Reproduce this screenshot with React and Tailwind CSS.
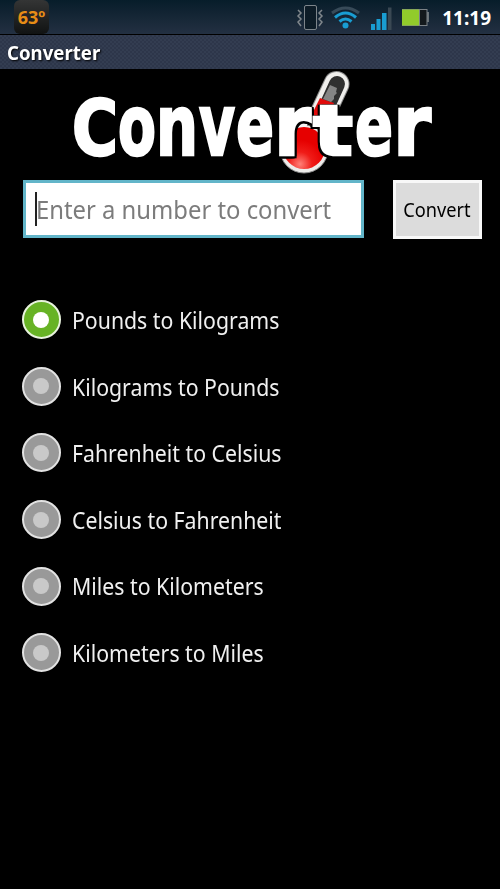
import { useState } from 'react'

const conversions = [
  'Pounds to Kilograms',
  'Kilograms to Pounds',
  'Fahrenheit to Celsius',
  'Celsius to Fahrenheit',
  'Miles to Kilometers',
  'Kilometers to Miles',
]

// x, width and size of each letter in the wordmark
const logoLetters = [
  { char: 'C', x: 72, width: 46, size: 76 },
  { char: 'o', x: 118, width: 38, size: 84 },
  { char: 'n', x: 156, width: 42, size: 84 },
  { char: 'v', x: 199, width: 36, size: 86 },
  { char: 'e', x: 236, width: 38, size: 84 },
  { char: 'r', x: 274, width: 37, size: 84 },
  { char: 't', x: 313, width: 40, size: 69 },
  { char: 'e', x: 355, width: 38, size: 84 },
  { char: 'r', x: 393, width: 38, size: 84 },
]

function StatusIcons() {
  return (
    <svg width="134" height="34" viewBox="296 0 134 34" fill="none">
      {/* vibrate */}
      <rect x="304.500" y="5.500" width="12" height="24" rx="1.500" fill="#0d1c27" stroke="#7d858b" />
      <path d="M298 10l3 3-3 3 3 3-3 3 3 4M322 10l-3 3 3 3-3 3 3 3-3 4" stroke="#80878c" strokeWidth="1.500" />
      {/* wifi */}
      <path d="M332 13Q345.500 3 359 13" stroke="#384b59" strokeWidth="3" />
      <path d="M335 17.500Q345.500 8.500 356 17.500M339.500 21.500Q345.500 16.500 351.500 21.500" stroke="#199dd2" strokeWidth="3" />
      <circle cx="345.500" cy="25.500" r="3" fill="#199dd2" />
      {/* signal */}
      <path d="M371 24h4v6h-4zM376.500 19h4v11h-4zM382 13h4.500v17H382z" fill="#199dd2" />
      <path d="M388 7.500h3.500V30H388z" fill="#3a4853" />
      {/* battery */}
      <path d="M427 12h2v10h-2z" fill="#6b7479" />
      <rect x="402" y="9" width="25.500" height="17" fill="#7b8286" />
      <rect x="402" y="9.500" width="17" height="16" fill="#91cb2b" />
      <rect x="420" y="10" width="6.500" height="15" fill="#13191c" />
    </svg>
  )
}

function Logo() {
  return (
    <svg className="block" width="500" height="110" viewBox="0 69 500 110">
      <defs>
        <radialGradient id="liquid" cx="300" cy="164" r="24" gradientUnits="userSpaceOnUse">
          <stop offset="0" stopColor="#ff8078" />
          <stop offset="0.500" stopColor="#f01c18" />
          <stop offset="1" stopColor="#e60000" />
        </radialGradient>
      </defs>

      {/* thermometer */}
      <circle cx="304" cy="149" r="24" fill="#eeecea" stroke="#8b8b8b" />
      <circle cx="304" cy="148" r="21" fill="url(#liquid)" />
      <path d="M290 126q8-6 18-2l-2 3q-8-1-16 3z" fill="#f5f5f5" />
      <path d="M336.500 84L322 115" stroke="#8b8b8b" strokeWidth="26" strokeLinecap="round" />
      <path d="M336.500 84L322 115" stroke="#f0efed" strokeWidth="24" strokeLinecap="round" />
      <path d="M337 84L323 115" stroke="#303030" strokeWidth="16" strokeLinecap="round" />
      <path d="M320 98l5 2 9 3-7 15h-17z" fill="#e00b0b" />
      <path d="M330 85l7 3-1 4 1 1-3 3 0 3-3 3-8-3z" fill="#858585" />

      <text
        y="155"
        fill="#fff"
        stroke="#fff"
        strokeWidth="2.500"
        className="font-['DejaVu_Sans','Liberation_Sans',sans-serif] font-bold [filter:drop-shadow(2px_0_0_#000)_drop-shadow(-2px_0_0_#000)_drop-shadow(0_2px_0_#000)]"
      >
        {logoLetters.map((letter, index) => (
          <tspan
            key={index}
            x={letter.x}
            fontSize={letter.size}
            textLength={letter.width}
            lengthAdjust="spacingAndGlyphs"
          >
            {letter.char}
          </tspan>
        ))}
      </text>
    </svg>
  )
}

function RadioOption({ label, checked, onSelect }) {
  return (
    <button onClick={onSelect} className="flex h-[66.600px] items-center text-left">
      <span
        className={`flex size-[39px] items-center justify-center rounded-full border-2 ${
          checked ? 'border-[#e8f3dd] bg-[#67b325]' : 'border-[#e2e2e2] bg-[#999]'
        }`}
      >
        <span className={`size-4 rounded-full ${checked ? 'bg-white' : 'bg-[#c9c9c9]'}`}></span>
      </span>
      <span className="ml-[11.500px] origin-left scale-x-[0.925] pt-px text-[23px] whitespace-nowrap text-[#f0f0f0]">
        {label}
      </span>
    </button>
  )
}

function App() {
  const [selected, setSelected] = useState(0)

  return (
    <div className="h-[889px] w-[500px] overflow-hidden bg-black font-['Noto_Sans','Open_Sans',sans-serif]">
      {/* status bar */}
      <div className="flex h-[35px] items-start justify-between border-b border-black bg-linear-to-b from-[#071d2a] to-[#233042] pr-[9px] pl-[14px]">
        <div className="flex h-[34px] w-[35px] items-center justify-center rounded-md bg-linear-to-b from-[#343535] to-[#111313] text-[18px] font-bold text-[#e78d16]">
          63º
        </div>
        <div className="flex h-[34px] items-center">
          <StatusIcons />
          <span className="ml-3 pt-0.5 text-[19px] font-bold text-white">11:19</span>
        </div>
      </div>

      {/* title bar */}
      <div className="flex h-[34px] items-center bg-[#303a4e] bg-[repeating-conic-gradient(#2d364a_0_25%,#333d51_0_50%)] bg-size-[4px_4px] pl-[7px]">
        <h1 className="origin-left scale-x-[0.98] pt-0.5 text-[19px] font-bold text-white [text-shadow:1px_1px_2px_#000]">
          Converter
        </h1>
      </div>

      <Logo />

      <div className="flex items-start pt-px pl-[23px]">
        <div className="flex h-[58px] w-[341px] items-center border-3 border-[#62b5c9] bg-white pl-[9px]">
          <span className="h-[34px] w-0.5 bg-[#222]"></span>
          <span className="-ml-px origin-left scale-x-[0.953] pt-0.5 text-[25px] whitespace-nowrap text-[#7c7c7c]">
            Enter a number to convert
          </span>
        </div>
        <button className="ml-[29px] flex h-[59px] w-[89px] items-center justify-center border-3 border-[#f8f8f8] bg-[#dcdcdc] text-[20px] text-black">
          <span className="scale-x-[0.91]">Convert</span>
        </button>
      </div>

      <div className="flex flex-col pt-[47.500px] pl-[21.500px]">
        {conversions.map((label, index) => (
          <RadioOption
            key={label}
            label={label}
            checked={selected === index}
            onSelect={() => setSelected(index)}
          />
        ))}
      </div>
    </div>
  )
}

export default App
